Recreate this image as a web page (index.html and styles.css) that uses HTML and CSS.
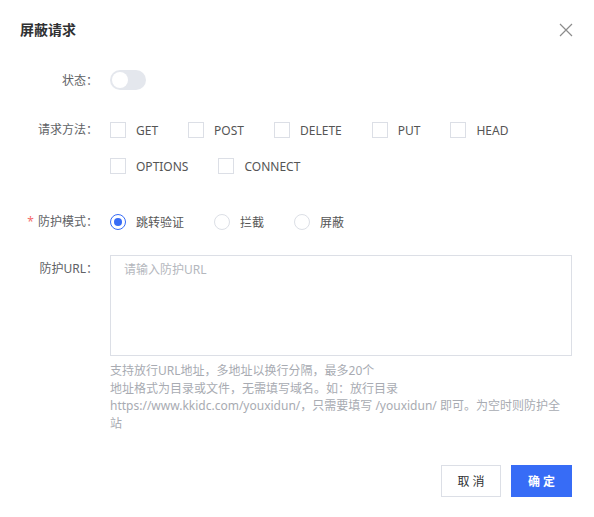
FILE: index.html
```html
<!DOCTYPE html>
<html lang="zh-CN">

<head>
    <meta charset="UTF-8">
    <meta name="viewport" content="width=device-width, initial-scale=1.0">
    <title>屏蔽请求</title>
    <link rel="stylesheet" href="styles.css">
</head>

<body>
    <div class="dialog">
        <div class="dialog-header">
            <h3 class="dialog-title">屏蔽请求</h3>
            <button class="close-btn" aria-label="关闭">
                <svg width="14" height="14" viewBox="0 0 14 14">
                    <path d="M1 1 L13 13 M13 1 L1 13" stroke="#8c8c8c" stroke-width="1.2" fill="none"/>
                </svg>
            </button>
        </div>

        <div class="form">
            <div class="form-item item-state">
                <label class="form-label">状态：</label>
                <div class="form-content">
                    <span class="switch"><span class="switch-knob"></span></span>
                </div>
            </div>

            <div class="form-item item-methods">
                <label class="form-label">请求方法：</label>
                <div class="form-content check-group">
                    <label class="check"><span class="check-box"></span>GET</label>
                    <label class="check"><span class="check-box"></span>POST</label>
                    <label class="check"><span class="check-box"></span>DELETE</label>
                    <label class="check"><span class="check-box"></span>PUT</label>
                    <label class="check"><span class="check-box"></span>HEAD</label>
                    <label class="check"><span class="check-box"></span>OPTIONS</label>
                    <label class="check"><span class="check-box"></span>CONNECT</label>
                </div>
            </div>

            <div class="form-item item-mode">
                <label class="form-label"><span class="required">*</span>防护模式：</label>
                <div class="form-content radio-group">
                    <label class="radio"><span class="radio-dot checked"></span>跳转验证</label>
                    <label class="radio"><span class="radio-dot"></span>拦截</label>
                    <label class="radio"><span class="radio-dot"></span>屏蔽</label>
                </div>
            </div>

            <div class="form-item item-url">
                <label class="form-label">防护URL：</label>
                <div class="form-content">
                    <textarea class="url-input" placeholder="请输入防护URL"></textarea>
                    <div class="help">
                        支持放行URL地址，多地址以换行分隔，最多20个<br>
                        地址格式为目录或文件，无需填写域名。如：放行目录 https://www.kkidc.com/youxidun/，只需要填写 /youxidun/ 即可。为空时则防护全站
                    </div>
                </div>
            </div>
        </div>

        <div class="dialog-footer">
            <button class="btn btn-cancel">取 消</button>
            <button class="btn btn-primary">确 定</button>
        </div>
    </div>
</body>

</html>
```

FILE: styles.css
```css
body {
    margin: 0;
    padding: 0;
    background-color: #fff;
    font-family: "Noto Sans", "Noto Sans CJK SC", sans-serif;
    font-size: 12px;
    color: #606266;
}

.dialog {
    width: 594px;
    height: 517px;
    box-sizing: border-box;
    padding: 20px 22px 20px 20px;
}

.dialog-header {
    display: flex;
    justify-content: space-between;
    align-items: center;
    height: 20px;
}

.dialog-title {
    margin: 0;
    font-size: 14px;
    font-weight: bold;
    color: #303133;
    line-height: 20px;
}

.close-btn {
    border: none;
    background: none;
    padding: 0;
    width: 14px;
    height: 14px;
    margin-right: -1px;
    cursor: pointer;
}

.form {
    margin-top: 25px;
}

.form-item {
    display: flex;
}

.form-label {
    width: 78px;
    flex-shrink: 0;
    padding-right: 12px;
    text-align: right;
    color: #606266;
}

.form-content {
    flex: 1;
}

.required {
    color: #f56c6c;
    margin-right: 4px;
}

/* 状态 */
.item-state .form-label,
.item-state .form-content {
    line-height: 32px;
    height: 32px;
}

.item-state {
    margin-bottom: 15px;
}

.switch {
    display: inline-block;
    vertical-align: middle;
    width: 36px;
    height: 20px;
    border-radius: 10px;
    background-color: #e4e7ed;
    position: relative;
    margin-top: -3px;
}

.switch-knob {
    position: absolute;
    left: 2px;
    top: 2px;
    width: 16px;
    height: 16px;
    border-radius: 50%;
    background-color: #fff;
}

/* 请求方法 */
.item-methods {
    margin-bottom: 22px;
}

.item-methods .form-label {
    line-height: 36px;
}

.check-group {
    display: flex;
    flex-wrap: wrap;
    margin-right: -10px;
}

.check,
.radio {
    display: flex;
    align-items: center;
    height: 36px;
    margin-right: 30px;
    color: #555;
}

.check-box {
    width: 14px;
    height: 14px;
    border: 1px solid #dcdfe6;
    margin-right: 10px;
}

/* 防护模式 */
.item-mode {
    margin-bottom: 17px;
}

.item-mode .form-label {
    line-height: 32px;
}

.radio-group {
    display: flex;
}

.radio {
    height: 32px;
}

.radio-dot {
    width: 14px;
    height: 14px;
    border: 1px solid #dcdfe6;
    border-radius: 50%;
    margin-right: 10px;
    box-sizing: content-box;
    position: relative;
}

.radio-dot.checked {
    border-color: #376cf6;
}

.radio-dot.checked::after {
    content: "";
    position: absolute;
    left: 3px;
    top: 3px;
    width: 8px;
    height: 8px;
    border-radius: 50%;
    background-color: #376cf6;
}

/* 防护URL */
.item-url .form-label {
    line-height: 28px;
}

.url-input {
    display: block;
    width: 100%;
    height: 101px;
    box-sizing: border-box;
    border: 1px solid #dcdfe6;
    border-radius: 0;
    padding: 5px 13px;
    font-family: "Noto Sans", "Noto Sans CJK SC", sans-serif;
    font-size: 12px;
    line-height: 18px;
    color: #606266;
    resize: none;
    outline: none;
}

.url-input::placeholder {
    color: #b4b7bd;
}

.help {
    margin-top: 6px;
    padding-right: 12px;
    line-height: 17.5px;
    color: #a8abb2;
}

.dialog-footer {
    display: flex;
    justify-content: flex-end;
    gap: 10px;
    margin-top: 33px;
}

.btn {
    height: 32px;
    padding: 0;
    font-family: "Noto Sans", "Noto Sans CJK SC", sans-serif;
    font-size: 12px;
    cursor: pointer;
}

.btn-cancel {
    width: 60px;
    border: 1px solid #dcdfe6;
    background-color: #fff;
    color: #303133;
}

.btn-primary {
    width: 61px;
    border: none;
    background-color: #376cf6;
    color: #fff;
    font-weight: bold;
}
```
